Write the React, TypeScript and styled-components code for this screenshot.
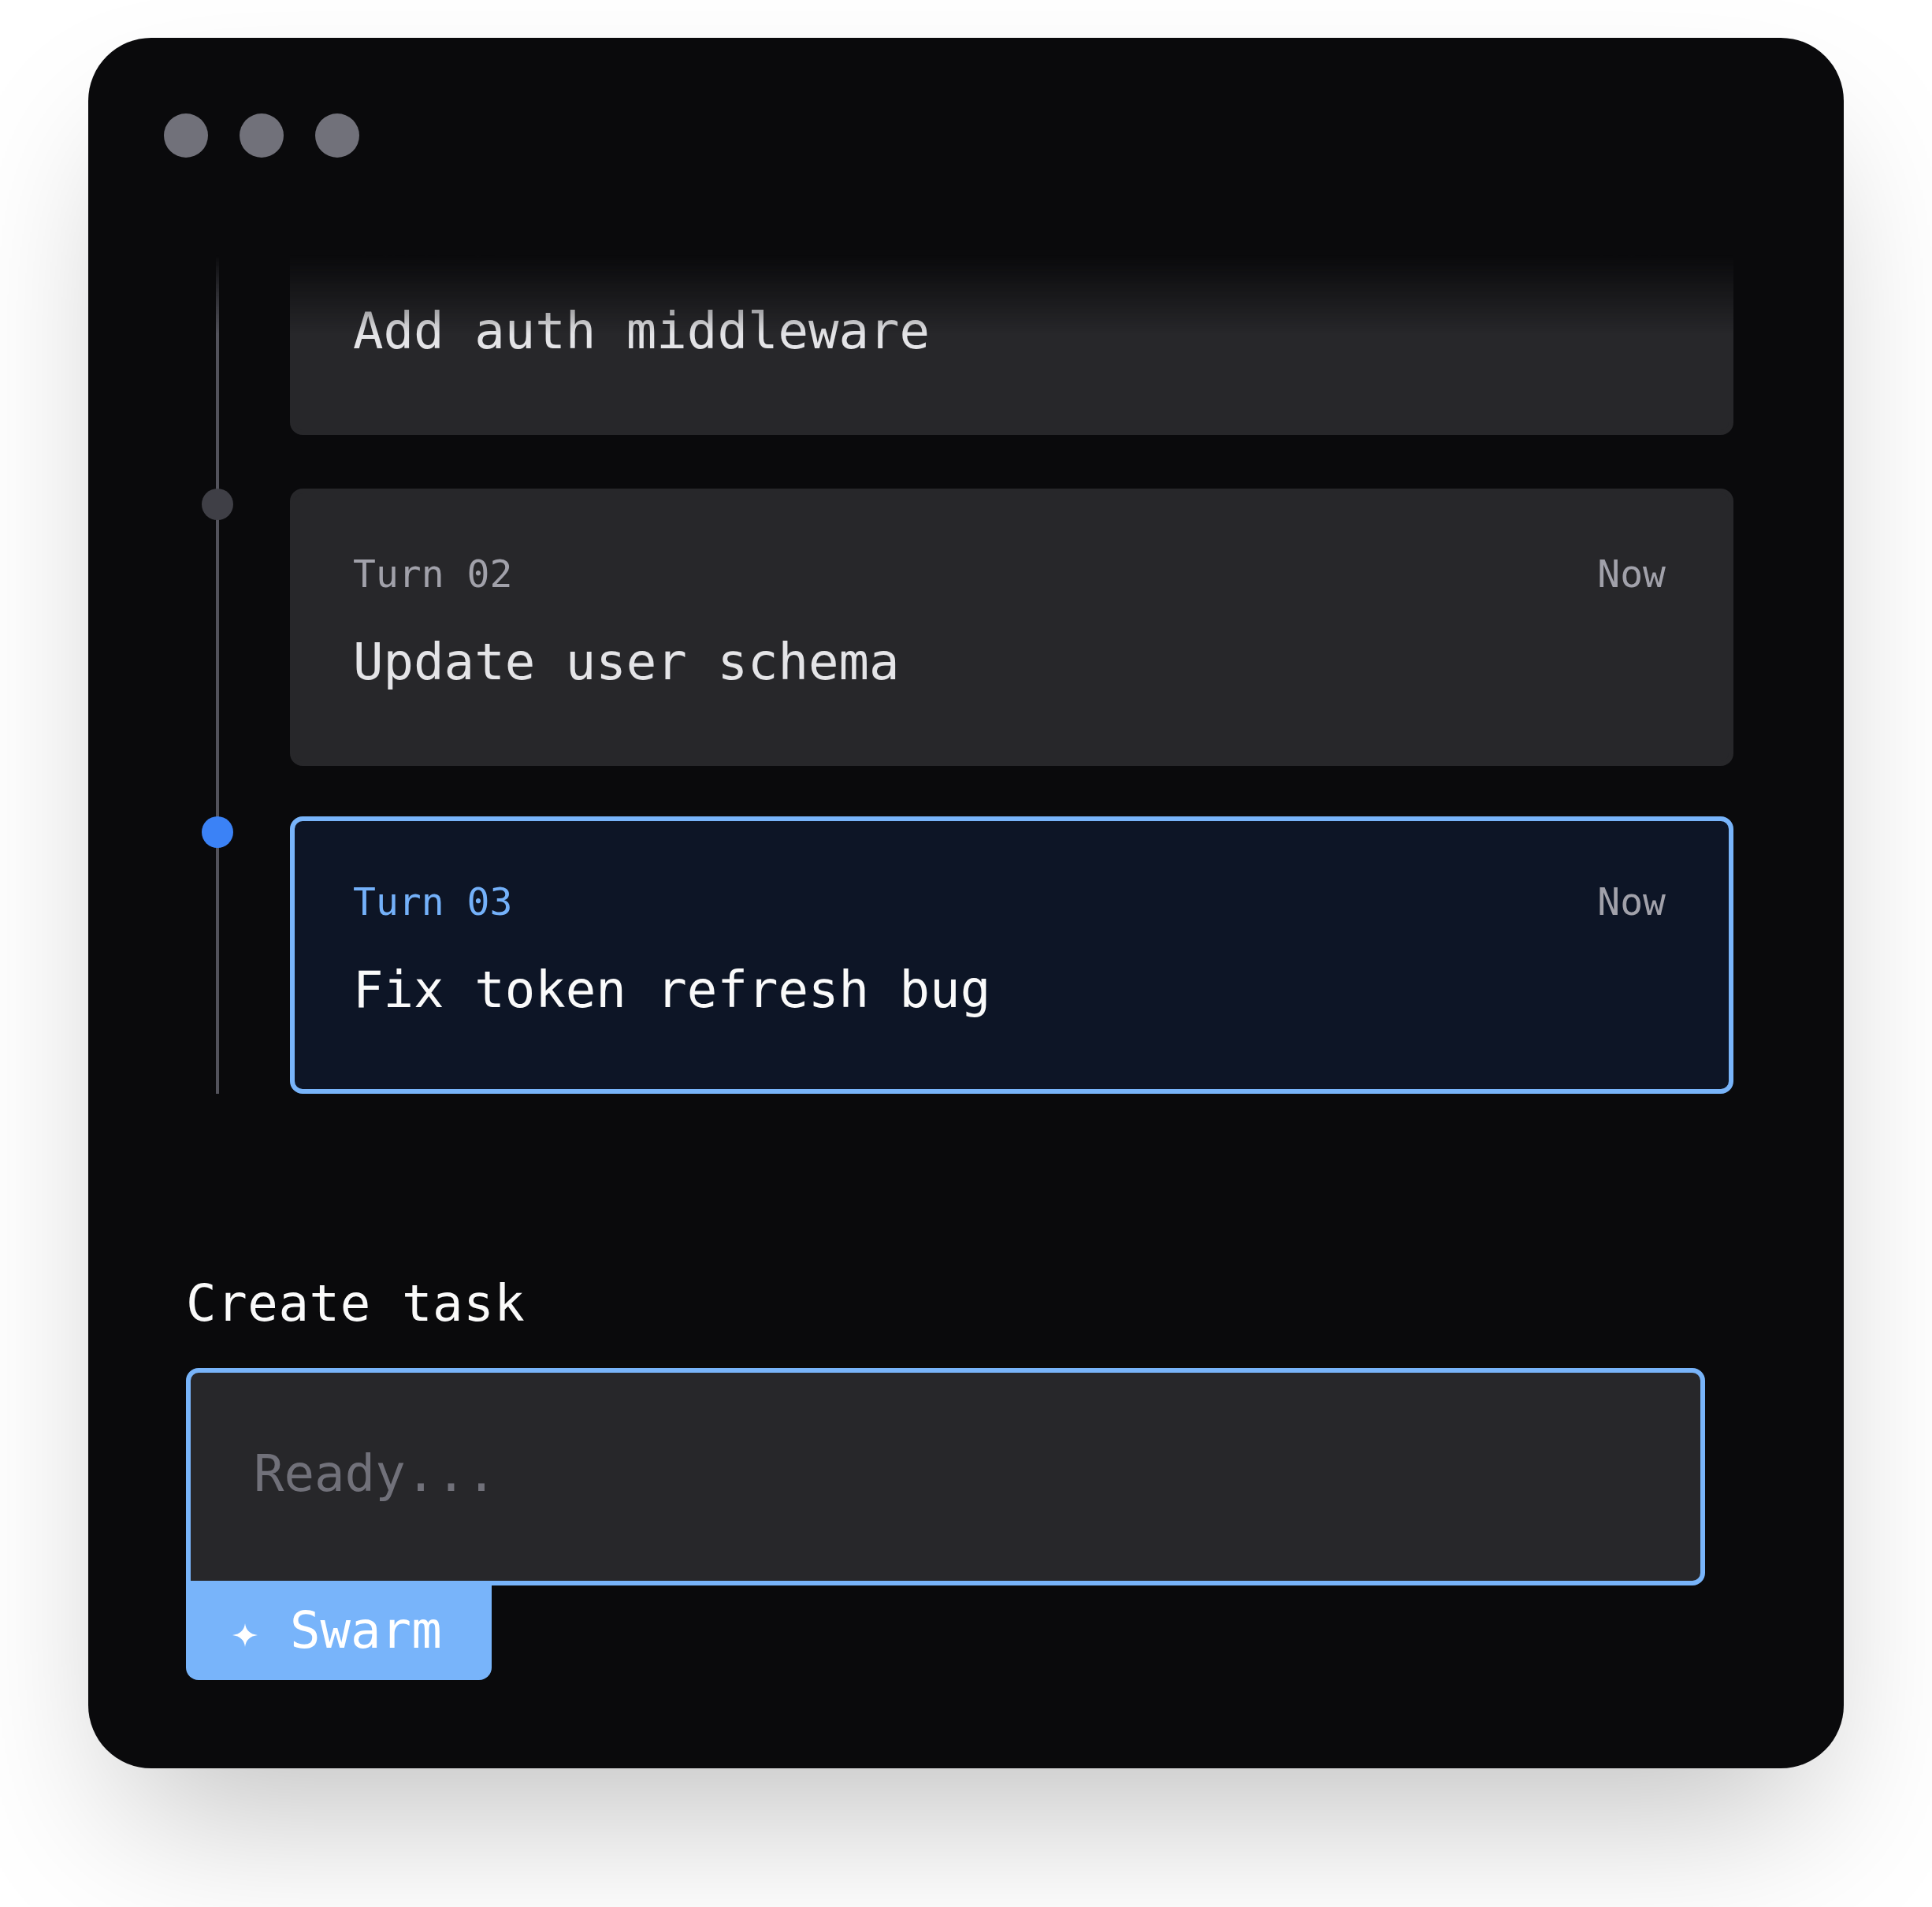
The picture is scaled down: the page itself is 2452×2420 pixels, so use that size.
import React from "react";
import styled, { createGlobalStyle } from "styled-components";

const mono = `"DejaVu Sans Mono", "Liberation Mono", monospace`;
const accent = "#78b4fa";

const GlobalStyle = createGlobalStyle`
  html, body {
    margin: 0;
    padding: 0;
    background: #ffffff;
  }
  body {
    font-family: ${mono};
  }
`;

const Page = styled.main`
  min-height: 2420px;
  box-sizing: border-box;
  padding: 48px 0 176px;
  background: #ffffff;
`;

const Window = styled.div`
  box-sizing: border-box;
  width: 2228px;
  margin: 0 auto;
  padding: 96px 96px 112px;
  background: #0a0a0c;
  border-radius: 80px;
  box-shadow: 0 100px 200px -48px rgba(0, 0, 0, 0.25);
  display: flex;
  flex-direction: column;
`;

const TitleBar = styled.div`
  display: flex;
  gap: 40px;
  height: 56px;
`;

const Light = styled.span`
  width: 56px;
  height: 56px;
  border-radius: 50%;
  background: #71717a;
`;

const Viewport = styled.div`
  margin: 124px 44px 0 0;
  height: 1064px;
  overflow: hidden;
  display: flex;
  flex-direction: column;
  justify-content: flex-end;
  -webkit-mask-image: linear-gradient(to bottom, transparent 0, #000 100px);
  mask-image: linear-gradient(to bottom, transparent 0, #000 100px);
`;

const Timeline = styled.ol`
  list-style: none;
  margin: 0;
  padding: 0;
  flex-shrink: 0;
  display: flex;
  flex-direction: column;
  gap: 64px;
  background: linear-gradient(#52525b, #52525b) no-repeat 66px 0 / 4px 100%;
`;

const Row = styled.li<{ $spaced?: boolean }>`
  display: grid;
  grid-template-columns: 160px 1fr;
  align-items: start;
  margin-bottom: ${(p) => (p.$spaced ? "4px" : "0")};
`;

const Marker = styled.span<{ $active?: boolean }>`
  width: 40px;
  height: 40px;
  margin-left: 48px;
  border-radius: 50%;
  background: ${(p) => (p.$active ? "#3b82f6" : "#3f3f46")};
`;

const Card = styled.article<{ $active?: boolean }>`
  box-sizing: border-box;
  height: 352px;
  padding: 74px 80px 70px 74px;
  border: 6px solid ${(p) => (p.$active ? accent : "#27272a")};
  border-radius: 16px;
  background: ${(p) => (p.$active ? "#0d1526" : "#27272a")};
`;

const CardHead = styled.div`
  display: flex;
  justify-content: space-between;
  align-items: baseline;
  font-size: 48px;
  line-height: 56px;
`;

const TurnLabel = styled.span<{ $active?: boolean }>`
  color: ${(p) => (p.$active ? "#74b1fa" : "#a1a1aa")};
`;

const Time = styled.span`
  color: #a1a1aa;
`;

const CardTitle = styled.div<{ $active?: boolean }>`
  margin-top: 28px;
  font-size: 64px;
  line-height: 112px;
  white-space: nowrap;
  color: ${(p) => (p.$active ? "#fafafa" : "#e4e4e7")};
`;

const Composer = styled.section`
  margin: 218px 80px 0 28px;
  display: flex;
  flex-direction: column;
  align-items: flex-start;
`;

const Label = styled.label`
  font-size: 64px;
  line-height: 96px;
  letter-spacing: 0.6px;
  color: #fafafa;
  margin-bottom: 34px;
`;

const Field = styled.textarea`
  align-self: stretch;
  box-sizing: border-box;
  display: block;
  height: 276px;
  margin: 0;
  padding: 72px 80px;
  border: 6px solid ${accent};
  border-radius: 16px 16px 16px 0;
  background: #27272a;
  color: #fafafa;
  font-family: ${mono};
  font-size: 64px;
  line-height: 112px;
  resize: none;
  outline: none;
  overflow: hidden;
  &::placeholder {
    color: #71717a;
    opacity: 1;
  }
`;

const SwarmButton = styled.button`
  margin-top: -6px;
  box-sizing: border-box;
  height: 126px;
  display: flex;
  align-items: center;
  gap: 41px;
  padding: 15px 63px 15px 59px;
  border: none;
  border-radius: 0 0 16px 16px;
  background: ${accent};
  color: #ffffff;
  font-family: ${mono};
  font-size: 64px;
  line-height: 96px;
  cursor: pointer;
`;

const Star = styled.svg`
  width: 32px;
  height: 30px;
  margin-top: 12px;
  flex-shrink: 0;
`;

type TurnItem = { id: string; title: string; time: string; active?: boolean };

const turns: TurnItem[] = [
  { id: "01", title: "Add auth middleware", time: "Now" },
  { id: "02", title: "Update user schema", time: "Now" },
  { id: "03", title: "Fix token refresh bug", time: "Now", active: true },
];

export default function App() {
  return (
    <>
      <GlobalStyle />
      <Page>
        <Window>
          <TitleBar>
            <Light />
            <Light />
            <Light />
          </TitleBar>
          <Viewport>
            <Timeline>
              {turns.map((t, i) => (
                <Row key={t.id} $spaced={i === 0}>
                  <Marker $active={t.active} />
                  <Card $active={t.active}>
                    <CardHead>
                      <TurnLabel $active={t.active}>Turn {t.id}</TurnLabel>
                      <Time>{t.time}</Time>
                    </CardHead>
                    <CardTitle $active={t.active}>{t.title}</CardTitle>
                  </Card>
                </Row>
              ))}
            </Timeline>
          </Viewport>
          <Composer>
            <Label htmlFor="task">Create task</Label>
            <Field id="task" placeholder="Ready..." />
            <SwarmButton type="button">
              <Star viewBox="0 0 32 30" aria-hidden="true">
                <path
                  d="M16 0 Q17.5 13.2 32 15 Q17.5 16.8 16 30 Q14.5 16.8 0 15 Q14.5 13.2 16 0 Z"
                  fill="#ffffff"
                />
              </Star>
              <span>Swarm</span>
            </SwarmButton>
          </Composer>
        </Window>
      </Page>
    </>
  );
}
